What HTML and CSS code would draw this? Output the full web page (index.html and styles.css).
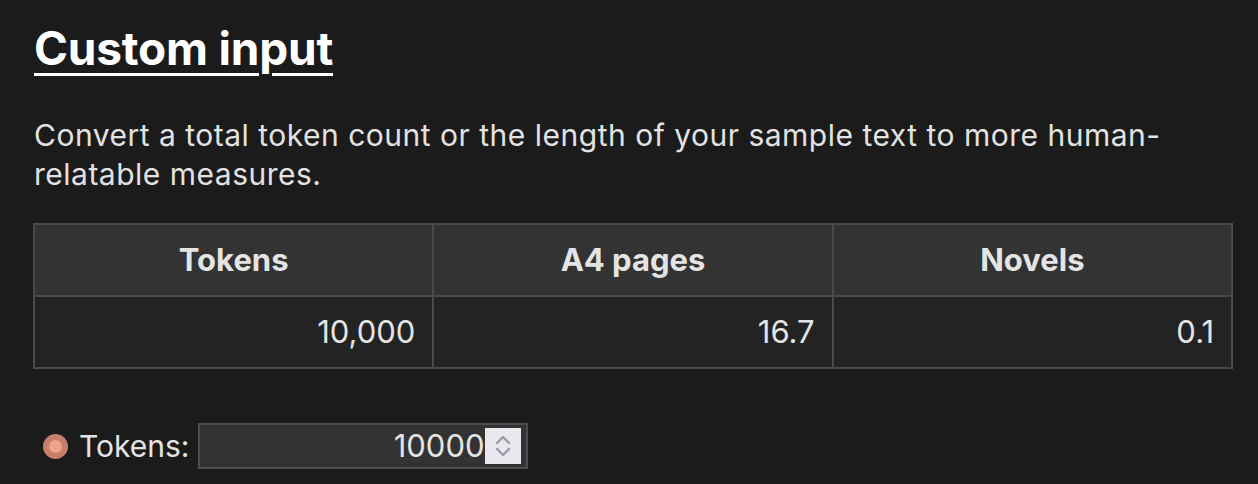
FILE: index.html
```html
<!DOCTYPE html>
<html lang="en">
<head>
<meta charset="utf-8">
<title>Custom input</title>
<link rel="stylesheet" href="styles.css">
</head>
<body>
<main class="page">
  <h2 class="title">Custom input</h2>
  <p class="lead">Convert a total token count or the length of your sample text to more human-relatable measures.</p>
  <table class="measures">
    <thead>
      <tr><th>Tokens</th><th>A4 pages</th><th>Novels</th></tr>
    </thead>
    <tbody>
      <tr><td>10,000</td><td>16.7</td><td>0.1</td></tr>
    </tbody>
  </table>
  <div class="control">
    <span class="radio"><span class="radio-dot"></span></span>
    <span class="label">Tokens:</span>
    <span class="numbox">
      <span class="numval">10000</span>
      <span class="spin">
        <svg width="36" height="36" viewBox="0 0 36 36" aria-hidden="true">
          <path d="M12 15 L18 9 L24 15" fill="none" stroke="#9c9aa8" stroke-width="2.4" stroke-linecap="round" stroke-linejoin="round"/>
          <path d="M12 21 L18 27 L24 21" fill="none" stroke="#9c9aa8" stroke-width="2.4" stroke-linecap="round" stroke-linejoin="round"/>
        </svg>
      </span>
    </span>
  </div>
</main>
</body>
</html>
```

FILE: styles.css
```css
html, body {
  margin: 0;
  padding: 0;
  background: #1b1b1b;
}
body {
  font-family: Inter, "Noto Sans", "Liberation Sans", sans-serif;
  color: #e4e4e4;
}
.page {
  padding: 20px 26px 0 33px;
}
.title {
  margin: 0 0 0 1px;
  font-size: 46px;
  line-height: 56px;
  font-weight: 700;
  color: #ffffff;
  text-decoration: underline;
  text-decoration-thickness: 3px;
  text-underline-offset: 8px;
  letter-spacing: -0.2px;
}
.lead {
  margin: 40px 0 0 1px;
  font-size: 30px;
  line-height: 39px;
  color: #e2e2e2;
  width: 1198px;
  letter-spacing: 0.5px;
}
.measures {
  margin-top: 29px;
  border-collapse: collapse;
  width: 1200px;
  table-layout: fixed;
  font-size: 31px;
  line-height: 36px;
}
.measures th,
.measures td {
  border: 2px solid #4a4a4a;
  padding: 17px 17px;
}
.measures th {
  background: #333333;
  color: #e4e4e4;
  font-weight: 700;
  text-align: center;
}
.measures td {
  background: #232323;
  color: #e4e4e4;
  text-align: right;
}
.control {
  margin-top: 54px;
  display: flex;
  align-items: center;
}
.radio {
  width: 25px;
  height: 25px;
  border-radius: 50%;
  background: #c8806c;
  display: flex;
  align-items: center;
  justify-content: center;
  margin-left: 10px;
  margin-right: 11px;
}
.radio-dot {
  width: 13px;
  height: 13px;
  border-radius: 50%;
  background: #f2a38f;
}
.label {
  font-size: 30px;
  line-height: 36px;
  color: #e4e4e4;
  margin-right: 8px;
}
.numbox {
  display: flex;
  align-items: center;
  justify-content: flex-end;
  width: 321px;
  height: 42px;
  background: #333333;
  border: 2px solid #4d4d4d;
  padding: 0 5px 0 0;
  box-sizing: content-box;
}
.numval {
  font-size: 31px;
  line-height: 36px;
  color: #e4e4e4;
}
.spin {
  width: 36px;
  height: 36px;
  background: #e9e8ee;
  display: flex;
}
```
